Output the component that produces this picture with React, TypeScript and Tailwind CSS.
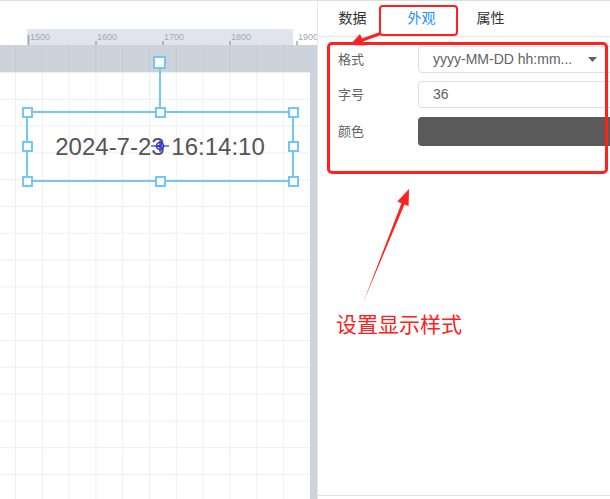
import React from "react"

const handles = [
  "left-[22px] top-[62px]",
  "left-[155px] top-[62px]",
  "left-[288px] top-[62px]",
  "left-[22px] top-[96px]",
  "left-[288px] top-[96px]",
  "left-[22px] top-[131px]",
  "left-[155px] top-[131px]",
  "left-[288px] top-[131px]",
]

const marks = [
  { x: 96, label: "1600" },
  { x: 163, label: "1700" },
  { x: 230, label: "1800" },
  { x: 297, label: "1900" },
]

function Ruler() {
  return (
    <svg width="317" height="16" className="block">
      <rect x="27" y="0" width="266" height="16" fill="#e1e4ef" />
      <line x1="28.5" y1="6" x2="28.5" y2="16" stroke="#9ea3ae" strokeWidth="1.5" />
      <text x="30" y="11" fontSize="9" fill="#a4a8b3" fontFamily="Liberation Sans, Arial, sans-serif">1500</text>
      {marks.map((m) => (
        <g key={m.label}>
          <line x1={m.x} y1="12" x2={m.x} y2="16" stroke="#9ea3ae" strokeWidth="1.5" />
          <text x={m.x + 1} y="11" fontSize="9" fill="#a4a8b3" fontFamily="Liberation Sans, Arial, sans-serif">
            {m.label}
          </text>
        </g>
      ))}
    </svg>
  )
}

export default function App() {
  return (
    <div className="relative w-[610px] h-[499px] flex overflow-hidden bg-white border-t border-[#dedede] font-['Liberation_Sans','Noto_Sans_CJK_SC',sans-serif]">
      {/* editor canvas */}
      <div className="w-[317px] shrink-0 flex flex-col">
        <div className="h-[28px]" />
        <Ruler />
        <div className="flex-1 flex">
          <div className="relative flex-1 flex flex-col">
            <div className="h-[27px] bg-[#ccd3da] bg-[linear-gradient(to_right,#c4cbd2_1px,transparent_1px)] bg-size-[26.8px_26.8px] bg-position-[15px_0px]" />
            <div className="flex-1 bg-white bg-[linear-gradient(to_right,#efefef_1px,transparent_1px),linear-gradient(to_bottom,#efefef_1px,transparent_1px)] bg-size-[26.8px_26.8px] bg-position-[15px_0px]" />

            {/* selected date element */}
            <div className="absolute left-[26px] top-[66px] w-[268px] h-[71px] border-2 border-[#74c6f7] flex items-center justify-center">
              <span className="text-[24px] leading-none text-[#555555] font-['Liberation_Sans',Arial,sans-serif]">2024-7-23 16:14:10</span>
            </div>
            <div className="absolute left-[159px] top-[23px] w-[2px] h-[40px] bg-[#74c6f7]" />
            <div className="absolute left-[153px] top-[11px] w-[13px] h-[13px] border-2 border-[#74c6f7] bg-white" />
            {handles.map((h) => (
              <div key={h} className={"absolute w-[11px] h-[11px] border-2 border-[#74c6f7] bg-white " + h} />
            ))}
            <svg width="20" height="16" className="absolute left-[150px] top-[93px]">
              <circle cx="10" cy="8" r="3.5" fill="none" stroke="#2b2bf5" strokeWidth="1.5" />
              <line x1="1" y1="8" x2="19" y2="8" stroke="#2b2bf5" strokeWidth="1.2" />
              <line x1="10" y1="2" x2="10" y2="14" stroke="#2b2bf5" strokeWidth="1.2" />
            </svg>
          </div>
          <div className="w-[7px] bg-[#ccd3da]" />
        </div>
      </div>

      {/* property panel */}
      <div className="w-[293px] shrink-0 flex flex-col border-l border-[#e4e7ed] overflow-hidden">
        <div className="h-[36px] shrink-0 flex items-center border-b border-[#e4e7ed] text-[14px]">
          <div className="w-[69px] text-center text-[#303133]">数据</div>
          <div className="w-[69px] text-center text-[#1890ff]">外观</div>
          <div className="w-[69px] text-center text-[#303133]">属性</div>
        </div>
        <div className="flex-1 flex flex-col gap-[8px] pt-[9px] pl-[20px] text-[13px] text-[#606266]">
          <div className="flex items-center h-[27px]">
            <div className="w-[80px] shrink-0">格式</div>
            <div className="w-[196px] h-[27px] shrink-0 flex items-center pl-[14px] pr-[16px] border border-[#dcdfe6] rounded-[4px] text-[14px] text-[#606266]">
              <span className="whitespace-nowrap">yyyy-MM-DD hh:mm...</span>
              <svg width="9" height="6" className="ml-auto shrink-0">
                <polygon points="0,0 9,0 4.5,5" fill="#606266" />
              </svg>
            </div>
          </div>
          <div className="flex items-center h-[27px]">
            <div className="w-[80px] shrink-0">字号</div>
            <div className="w-[196px] h-[27px] shrink-0 flex items-center pl-[14px] border border-[#dcdfe6] rounded-[4px] text-[14px] text-[#606266]">
              36
            </div>
          </div>
          <div className="flex items-center h-[29px] mt-[1px]">
            <div className="w-[80px] shrink-0">颜色</div>
            <div className="w-[196px] h-[29px] shrink-0 bg-[#5a5a5a] rounded-[4px]" />
          </div>
        </div>
        <div className="h-[4px] shrink-0 border-t border-[#e0e0e0]" />
      </div>

      {/* annotations */}
      <div className="absolute left-[379px] top-[4px] w-[79px] h-[31px] border-[2.5px] border-[#ff2020] rounded-[4px]" />
      <div className="absolute left-[327px] top-[41px] w-[281px] h-[132px] border-[3px] border-[#ff2020] rounded-[5px]" />
      <svg width="610" height="499" className="absolute left-0 top-0 pointer-events-none">
        <polygon points="380,31 362,37.5 360,33 350,44 364.5,44.5 363,40.5 381,34" fill="#ff2020" />
        <polygon points="363,302 401.5,202.2 397.4,200.6 409,188 408.6,205 404.5,203.4" fill="#ff2020" />
      </svg>
      <div className="absolute left-[336px] top-[312px] text-[21px] leading-none text-[#ff2020] font-['Noto_Sans_CJK_SC',sans-serif]">
        设置显示样式
      </div>
    </div>
  )
}
